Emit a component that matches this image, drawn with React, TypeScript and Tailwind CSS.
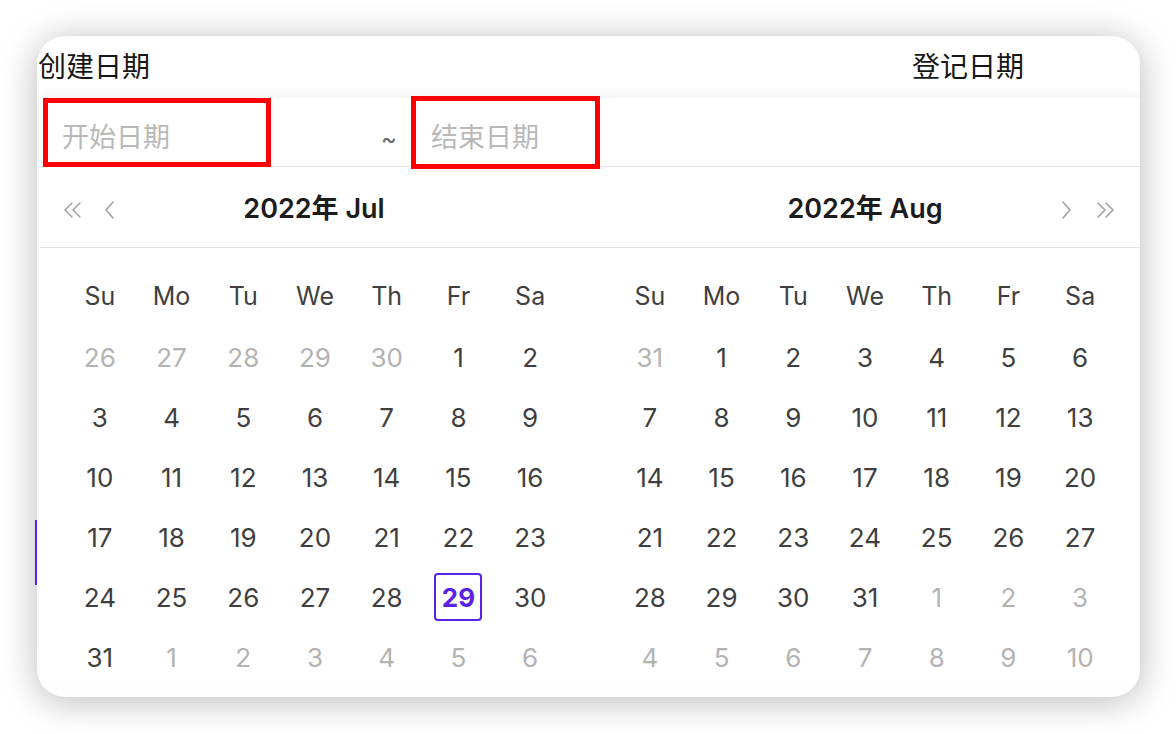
import React from 'react'

type Day = { n: number; muted?: boolean; selected?: boolean }

const weekDays = ['Su', 'Mo', 'Tu', 'We', 'Th', 'Fr', 'Sa']

const range = (a: number, b: number, muted = false): Day[] =>
  Array.from({ length: b - a + 1 }, (_, i) => ({ n: a + i, muted }))

const july: Day[] = [
  ...range(26, 30, true),
  ...range(1, 31).map((d) => (d.n === 29 ? { ...d, selected: true } : d)),
  ...range(1, 6, true),
]

const august: Day[] = [...range(31, 31, true), ...range(1, 31), ...range(1, 10, true)]

const font = { fontFamily: 'Inter, "Noto Sans CJK SC", sans-serif' }

const Chevron: React.FC<{ dir: 'left' | 'right'; double?: boolean }> = ({ dir, double }) => {
  const flip = dir === 'right' ? 'scale(-1,1) translate(-22,0)' : undefined
  return (
    <svg width={double ? 22 : 12} height="20" viewBox={double ? '0 0 22 20' : '0 0 12 20'} fill="none">
      <g transform={double ? flip : dir === 'right' ? 'scale(-1,1) translate(-12,0)' : undefined} stroke="#a3a3a3" strokeWidth="1.6" strokeLinecap="round" strokeLinejoin="round">
        {double ? (
          <>
            <path d="M10 3 L3 10 L10 17" />
            <path d="M18 3 L11 10 L18 17" />
          </>
        ) : (
          <path d="M9 2 L2 10 L9 18" />
        )}
      </g>
    </svg>
  )
}

const MonthGrid: React.FC<{ days: Day[] }> = ({ days }) => (
  <div className="grid grid-cols-7">
    {weekDays.map((w) => (
      <div key={w} className="h-[60px] flex items-center justify-center text-[25px] text-[#3f3f3f]">
        {w}
      </div>
    ))}
    {days.map((d, i) => (
      <div key={i} className="h-[60px] flex items-center justify-center">
        {d.selected ? (
          <span className="w-[48px] h-[48px] flex items-center justify-center rounded-[4px] border-2 border-[#5b21e6] text-[#5b21e6] font-bold text-[26px]">
            {d.n}
          </span>
        ) : (
          <span className={d.muted ? 'text-[26px] text-[#b3b3b3]' : 'text-[26px] text-[#3f3f3f]'}>{d.n}</span>
        )}
      </div>
    ))}
  </div>
)

export default function App() {
  return (
    <div className="w-[1176px] h-[734px] bg-white overflow-hidden relative" style={font}>
      <div className="ml-[37px] mt-[36px] w-[1103px] h-[661px] rounded-[28px] bg-white overflow-hidden shadow-[0_4px_36px_rgba(0,0,0,0.28)]">
        <div className="h-[62px] flex items-center text-[28px] text-[#161616]">
          <span className="ml-[1px]">创建日期</span>
          <span className="ml-[762px]">登记日期</span>
        </div>

        <div className="ml-[3px] bg-white shadow-[0_-4px_10px_rgba(0,0,0,0.05)]">
          <div className="h-[69px] flex items-start border-b border-[#e2e2e2]">
            <div className="ml-[3px] w-[228px] h-[69px] border-[5px] border-[#ff0000] flex items-center pl-[14px] pt-[11px] text-[27px] text-[#b8b8b8]">
              开始日期
            </div>
            <div className="w-[140px] h-[69px] flex items-center justify-end pr-[14px] pt-[12px] text-[24px] text-[#6b6b6b]">~</div>
            <div className="-mt-[2px] w-[189px] h-[73px] border-[5px] border-[#ff0000] flex items-center pl-[15px] pt-[11px] text-[27px] text-[#b8b8b8]">
              结束日期
            </div>
          </div>

          <div className="h-[81px] px-[24px] pt-[5px] grid grid-cols-2 gap-[48px] border-b border-[#e2e2e2]">
            <div className="flex items-center">
              <div className="w-[60px] flex items-center gap-[20px] -ml-[2px]">
                <Chevron dir="left" double />
                <Chevron dir="left" />
              </div>
              <div className="flex-1 text-center text-[27px] font-semibold text-[#1c1c1c]">2022年 Jul</div>
              <div className="w-[60px]" />
            </div>
            <div className="flex items-center">
              <div className="w-[60px]" />
              <div className="flex-1 text-center text-[27px] font-semibold text-[#1c1c1c]">2022年 Aug</div>
              <div className="w-[60px] flex items-center justify-end gap-[22px]">
                <Chevron dir="right" />
                <Chevron dir="right" double />
              </div>
            </div>
          </div>

          <div className="px-[24px] pt-[19px] grid grid-cols-2 gap-[48px]">
            <MonthGrid days={july} />
            <MonthGrid days={august} />
          </div>
        </div>
      </div>
      <div className="absolute left-[35px] top-[520px] w-[2px] h-[65px] bg-[#5b21e6]" />
    </div>
  )
}
